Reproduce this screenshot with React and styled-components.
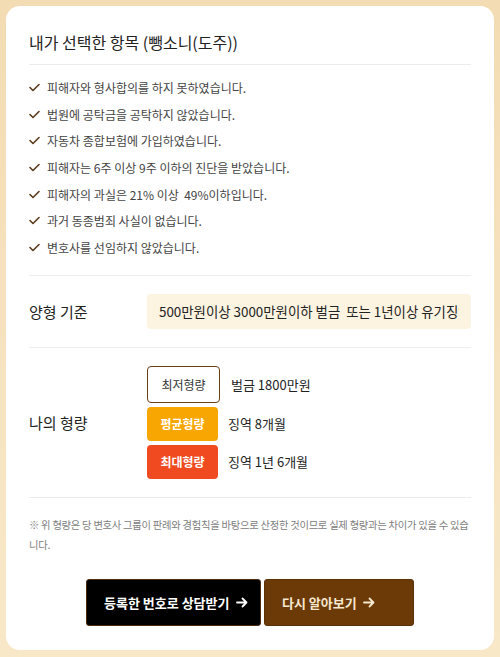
import React from 'react'
import styled, { createGlobalStyle } from 'styled-components'

const GlobalStyle = createGlobalStyle`
    html, body {
        margin: 0;
        padding: 0;
    }
    body {
        font-family: 'Noto Sans CJK KR', 'Noto Sans', sans-serif;
        color: #222;
        background: linear-gradient(180deg, #f3dcb3 0%, #f8e8c8 100%);
        min-height: 657px;
    }
`

const Page = styled.div`
    padding: 6px;
    box-sizing: border-box;
    width: 500px;
    height: 657px;
`
const Card = styled.div`
    background: #fff;
    border-radius: 14px;
    padding: 0 23px 22px;
    height: 644px;
    box-sizing: border-box;
`
const Title = styled.h2`
    margin: 0;
    padding: 24px 0 10px;
    font-size: 16px;
    line-height: 24px;
    font-weight: 400;
    color: #222;
    border-bottom: 1px solid #ececec;
`
const CheckList = styled.ul`
    list-style: none;
    margin: 0;
    padding: 9px 0 14px;
    border-bottom: 1px solid #ececec;
`
const CheckItem = styled.li`
    display: flex;
    align-items: center;
    gap: 7px;
    height: 26.7px;
    font-size: 12px;
    color: #444;
    white-space: pre;
`
const Row = styled.div`
    display: flex;
    align-items: center;
    padding: ${p => p.$pad};
    border-bottom: 1px solid #ececec;
`
const RowLabel = styled.div`
    width: 118px;
    flex-shrink: 0;
    font-size: 15px;
    color: #222;
`
const Standard = styled.div`
    flex: 1;
    min-width: 0;
    height: 35px;
    display: flex;
    align-items: center;
    padding: 0 12px;
    background: #fdf3e1;
    border-radius: 4px;
    font-size: 13.4px;
    color: #222;
    white-space: pre;
    overflow: hidden;
`
const StandardText = styled.span`
    overflow: hidden;
    display: block;
`
const Penalties = styled.div`
    display: flex;
    flex-direction: column;
    gap: 4px;
`
const PenaltyRow = styled.div`
    display: flex;
    align-items: center;
    gap: ${p => (p.$kind === 'min' ? '11px' : '10px')};
    font-size: 13px;
    color: #222;
`
const Badge = styled.span`
    display: flex;
    align-items: center;
    justify-content: center;
    box-sizing: border-box;
    width: ${p => (p.$kind === 'min' ? '73px' : '71px')};
    height: ${p => (p.$kind === 'min' ? '37px' : '34px')};
    border-radius: 4px;
    font-size: 12px;
    font-weight: ${p => (p.$kind === 'min' ? 400 : 700)};
    color: ${p => (p.$kind === 'min' ? '#333' : '#fff')};
    background: ${p => ({ min: '#fff', avg: '#f8a602', max: '#f04a21' }[p.$kind])};
    border: ${p => (p.$kind === 'min' ? '1px solid #6b3e14' : 'none')};
`
const Note = styled.p`
    margin: 0;
    padding: 17px 0 0;
    font-size: 10.3px;
    letter-spacing: -0.25px;
    line-height: 20px;
    color: #808080;
    word-break: break-all;
`
const Actions = styled.div`
    display: flex;
    justify-content: center;
    gap: 3px;
    margin-top: 24px;
`
const ActionButton = styled.button`
    display: flex;
    align-items: center;
    gap: 6px;
    box-sizing: border-box;
    width: ${p => p.$w};
    height: 47px;
    padding: 0 0 0 17px;
    border-radius: 3px;
    border: 1px solid ${p => (p.$dark ? '#4a2c10' : '#5a3208')};
    background: ${p => (p.$dark ? '#000' : '#6b3a07')};
    color: ${p => (p.$dark ? '#fff' : '#f6e7cf')};
    font-family: inherit;
    font-size: 13px;
    font-weight: 700;
    cursor: pointer;
`

function Check() {
    return (
        <svg width="11" height="9" viewBox="0 0 11 9">
            <path d="M1 4.5 L4 7.5 L10 1.5" fill="none" stroke="#5b3b1c" strokeWidth="1.6" strokeLinecap="round" strokeLinejoin="round" />
        </svg>
    )
}

function Arrow() {
    return (
        <svg width="12" height="11" viewBox="0 0 12 11">
            <path d="M1 5.5 H10.5 M6.5 1.5 L10.5 5.5 L6.5 9.5" fill="none" stroke="currentColor" strokeWidth="1.8" strokeLinecap="round" strokeLinejoin="round" />
        </svg>
    )
}

const choices = [
    '피해자와 형사합의를 하지 못하였습니다.',
    '법원에 공탁금을 공탁하지 않았습니다.',
    '자동차 종합보험에 가입하였습니다.',
    '피해자는 6주 이상 9주 이하의 진단을 받았습니다.',
    '피해자의 과실은 21% 이상  49%이하입니다.',
    '과거 동종범죄 사실이 없습니다.',
    '변호사를 선임하지 않았습니다.',
]

const penalties = [
    { kind: 'min', label: '최저형량', value: '벌금 1800만원' },
    { kind: 'avg', label: '평균형량', value: '징역 8개월' },
    { kind: 'max', label: '최대형량', value: '징역 1년 6개월' },
]

export default function App() {
    return (
        <>
            <GlobalStyle />
            <Page>
                <Card>
                    <Title>내가 선택한 항목 (뺑소니(도주))</Title>
                    <CheckList>
                        {choices.map(text => (
                            <CheckItem key={text}>
                                <Check />
                                <span>{text}</span>
                            </CheckItem>
                        ))}
                    </CheckList>
                    <Row $pad="18px 0">
                        <RowLabel>양형 기준</RowLabel>
                        <Standard>
                            <StandardText>500만원이상 3000만원이하 벌금  또는 1년이상 유기징역</StandardText>
                        </Standard>
                    </Row>
                    <Row $pad="18px 0 18px">
                        <RowLabel>나의 형량</RowLabel>
                        <Penalties>
                            {penalties.map(p => (
                                <PenaltyRow key={p.kind} $kind={p.kind}>
                                    <Badge $kind={p.kind}>{p.label}</Badge>
                                    <span>{p.value}</span>
                                </PenaltyRow>
                            ))}
                        </Penalties>
                    </Row>
                    <Note>※ 위 형량은 당 변호사 그룹이 판례와 경험칙을 바탕으로 산정한 것이므로 실제 형량과는 차이가 있을 수 있습니다.</Note>
                    <Actions>
                        <ActionButton $dark $w="175px">
                            등록한 번호로 상담받기 <Arrow />
                        </ActionButton>
                        <ActionButton $w="150px">
                            다시 알아보기 <Arrow />
                        </ActionButton>
                    </Actions>
                </Card>
            </Page>
        </>
    )
}
